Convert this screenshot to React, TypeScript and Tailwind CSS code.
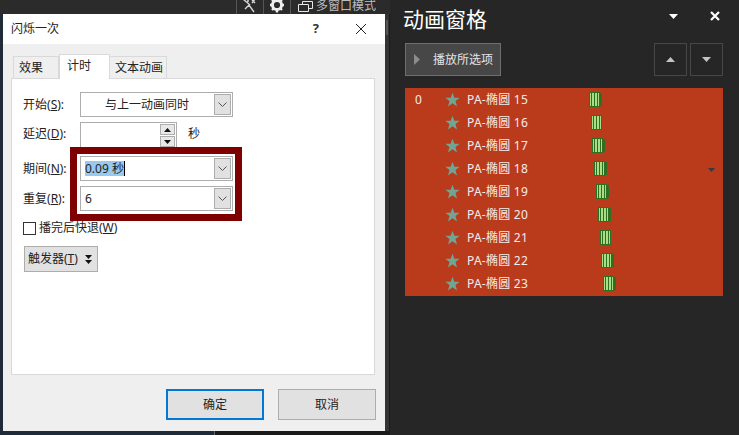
const FONT = "font-['Noto_Sans','Noto_Sans_CJK_SC',sans-serif]";

const rows = [
  { name: "PA-椭圆 15", num: "0", bar: 589, tail: true },
  { name: "PA-椭圆 16", num: "", bar: 591, tail: false },
  { name: "PA-椭圆 17", num: "", bar: 592, tail: true },
  { name: "PA-椭圆 18", num: "", bar: 594, tail: true, arrow: true },
  { name: "PA-椭圆 19", num: "", bar: 596, tail: true },
  { name: "PA-椭圆 20", num: "", bar: 598, tail: true },
  { name: "PA-椭圆 21", num: "", bar: 600, tail: false },
  { name: "PA-椭圆 22", num: "", bar: 601, tail: true },
  { name: "PA-椭圆 23", num: "", bar: 603, tail: true },
];

function Caret({ up = false, color = "#fff", w = 10, h = 5 }: { up?: boolean; color?: string; w?: number; h?: number }) {
  return (
    <svg width={w} height={h} viewBox="0 0 10 5" preserveAspectRatio="none" className="block">
      <polygon points={up ? "5,0 10,5 0,5" : "0,0 10,0 5,5"} fill={color} />
    </svg>
  );
}

function Chevron() {
  return (
    <svg width="9" height="5" viewBox="0 0 9 5" className="block">
      <path d="M0.5 0.5 L4.5 4.5 L8.5 0.5" fill="none" stroke="#555" strokeWidth="1" />
    </svg>
  );
}

function Combo({ children, className = "" }: { children: React.ReactNode; className?: string }) {
  return (
    <div className={`flex h-[25px] w-[153px] items-center border border-[#adadad] bg-white pr-[1px] text-[12px] text-[#222] ${className}`}>
      <div className="flex-1 min-w-0">{children}</div>
      <div className="flex h-[21px] w-[17px] items-center justify-center border border-[#adadad] bg-[#e1e1e1]">
        <Chevron />
      </div>
    </div>
  );
}

function Label({ text, k }: { text: string; k: string }) {
  return (
    <div className="w-[57px] shrink-0 text-[12px] text-[#222]">
      {text}(<span className="underline">{k}</span>):
    </div>
  );
}

function GreenBar({ left, tail }: { left: number; tail: boolean }) {
  return (
    <div className="absolute top-[4px] flex h-[15px]" style={{ left: left - 405 }}>
      <div className="flex h-full w-[11px] justify-between border border-[#2f6f22] bg-[#a9de86] px-[1px]">
        <div className="w-[1px] bg-[#2f6f22]" />
        <div className="w-[1px] bg-[#2f6f22]" />
        <div className="w-[1px] bg-[#2f6f22]" />
      </div>
      {tail && <div className="my-[1px] w-[2px] bg-[#2f6f22]" />}
    </div>
  );
}

function TopBar() {
  return (
    <div className="flex h-[14px] items-start justify-end bg-[#2b2b2b] pr-[14px] text-[12px] leading-[12px] text-[#bdbdbd]">
      <div className="flex h-[14px] w-[27px] items-start justify-center border-l border-[#555] pl-[1px]">
        <svg width="16" height="13" viewBox="0 1 16 13">
          <path d="M1 0 L8 6 M3 10 L7 6 L12 13 M10 1 L13 4 M13 0 L10 4 M5 2 L7 2" stroke="#d5d5d5" strokeWidth="1.4" fill="none" />
        </svg>
      </div>
      <div className="flex h-[14px] w-[27px] items-start justify-center border-l border-[#555]">
        <svg width="16" height="13" viewBox="0 3 16 13">
          <circle cx="8" cy="8" r="4.6" fill="none" stroke="#eee" strokeWidth="3" />
          <path d="M8 0.5V3 M8 13V15.5 M1 8H3.5 M12.5 8H15 M3 3L4.5 4.5 M13 3L11.5 4.5 M3 13L4.5 11.5 M13 13L11.5 11.5" stroke="#eee" strokeWidth="2.4" />
        </svg>
      </div>
      <div className="flex h-[14px] items-start border-l border-[#555] pl-[7px]">
        <svg width="15" height="14" viewBox="0 0 15 14" className="mr-[3px]">
          <path d="M0.5 4.5H10.5V11.5H0.5Z M4.5 4V1.5H14.5V8.5H11" fill="none" stroke="#e8e8e8" strokeWidth="1" />
        </svg>
        <div className="h-[12px] leading-[12px]">多窗口模式</div>
      </div>
    </div>
  );
}

function Dialog() {
  return (
    <div className="ml-[3px] flex h-[417px] w-[382px] shrink-0 flex-col bg-[#efefef] text-[#222]">
      <div className="flex h-[30px] items-center bg-white pl-[8px] pr-[18px] text-[12px]">
        <span className="flex-1">闪烁一次</span>
        <span className="mr-[36px] text-[13px] font-bold text-[#333]">?</span>
        <svg width="12" height="12" viewBox="0 0 12 12">
          <path d="M1 1L11 11M11 1L1 11" stroke="#222" strokeWidth="1" />
        </svg>
      </div>

      <div className="flex h-[34px] items-end pl-[10px] text-[12px]">
        <div className="flex h-[22px] w-[46px] items-center border border-b-0 border-[#d9d9d9] pl-[5px]">效果</div>
        <div className="z-10 -mb-[1px] flex h-[25px] w-[51px] items-start border border-b-0 border-[#d9d9d9] bg-white pl-[7px] pt-[2px]">计时</div>
        <div className="flex h-[22px] w-[57px] items-center border border-b-0 border-l-0 border-[#d9d9d9] pl-[5px]">文本动画</div>
      </div>

      <div className="relative mx-[8px] flex h-[297px] w-[364px] flex-col border border-[#d9d9d9] bg-white pl-[11px] pt-[13px]">
        <div className="flex h-[25px] items-center">
          <Label text="开始" k="S" />
          <Combo><div className="pl-[24px]">与上一动画同时</div></Combo>
        </div>

        <div className="mt-[5px] flex h-[26px] items-start">
          <div className="pt-[3px]"><Label text="延迟" k="D" /></div>
          <div className="flex h-[26px] w-[97px] flex-col items-end gap-[1px] border border-[#adadad] px-[1px] pt-[1px]">
            <div className="flex h-[11px] w-[15px] items-center justify-center border border-[#adadad] bg-[#e8e8e8]"><Caret up color="#111" w={7} h={4} /></div>
            <div className="flex h-[11px] w-[15px] items-center justify-center border border-[#adadad] bg-[#e8e8e8]"><Caret color="#111" w={7} h={4} /></div>
          </div>
          <span className="ml-[11px] pt-[3px] text-[12px]">秒</span>
        </div>

        <div className="mt-[8px] flex h-[25px] items-center">
          <Label text="期间" k="N" />
          <Combo>
            <div className="flex items-center pl-[4px]">
              <span className="bg-[#99c9ef] leading-[15px] text-[#222]">0.09 秒</span>
              <span className="h-[15px] w-[1px] bg-black" />
            </div>
          </Combo>
        </div>

        <div className="mt-[5px] flex h-[25px] items-center">
          <Label text="重复" k="R" />
          <Combo><div className="pl-[4px]">6</div></Combo>
        </div>

        <div className="mt-[11px] flex h-[13px] items-center text-[12px]">
          <div className="h-[13px] w-[13px] border border-[#333] bg-white" />
          <span className="ml-[3px] -translate-y-[1px]">播完后快退(<span className="underline">W</span>)</span>
        </div>

        <div className="ml-[1px] mt-[11px] flex h-[26px] w-[74px] items-center border border-[#adadad] bg-[#e1e1e1] pl-[3px] text-[12px]">
          <span>触发器(<span className="underline">T</span>)</span>
          <div className="ml-[7px] flex flex-col gap-[1px]">
            <Caret color="#111" w={7} h={4} />
            <Caret color="#111" w={7} h={4} />
          </div>
        </div>

        {/* 红色标注框 */}
        <div className="absolute left-[58px] top-[68px] h-[74px] w-[172px] border-[7px] border-[#7f0000]" />
      </div>

      <div className="flex justify-end gap-[14px] pr-[9px] pt-[14px] text-[12px]">
        <div className="flex h-[31px] w-[98px] items-center justify-center border-2 border-[#0078d7] bg-[#e1e1e1]">确定</div>
        <div className="flex h-[31px] w-[98px] items-center justify-center border border-[#adadad] bg-[#e1e1e1]">取消</div>
      </div>
    </div>
  );
}

function Pane() {
  return (
    <div className="flex flex-1 flex-col bg-[#262626] pl-[15px] pr-[16px]">
      <div className="flex h-[43px] items-start pt-[5px]">
        <span className="-ml-[2px] flex-1 text-[21px] leading-[28px] text-white">动画窗格</span>
        <div className="mr-[32px] mt-[9px]"><Caret w={9} h={5} /></div>
        <svg width="10" height="10" viewBox="0 0 10 10" className="mr-[3px] mt-[6px]">
          <path d="M1 1L9 9M9 1L1 9" stroke="#fff" strokeWidth="2.2" />
        </svg>
      </div>

      <div className="flex h-[33px] items-stretch">
        <div className="flex w-[96px] items-center border border-[#6e6e6e] bg-[#474747] text-[12px] text-[#e4e4e4]">
          <svg width="6" height="11" viewBox="0 0 6 11" className="ml-[8px] mr-[13px]">
            <polygon points="0,0 6,5.5 0,11" fill="#8c8c8c" />
          </svg>
          播放所选项
        </div>
        <div className="flex-1" />
        <div className="flex w-[33px] items-center justify-center border border-[#474747]"><Caret up color="#c4c4c4" w={9} h={5} /></div>
        <div className="ml-[3px] flex w-[33px] items-center justify-center border border-[#474747]"><Caret color="#c4c4c4" w={9} h={5} /></div>
      </div>

      <div className="mt-[12px] flex flex-col bg-[#b93b1c] pb-[1px]">
        {rows.map((r) => (
          <div key={r.name} className="relative flex h-[23px] items-center text-[12px] tracking-[0.25px] text-[#f4ecec]">
            <span className="w-[40px] pl-[10px]">{r.num}</span>
            <svg width="15" height="15" viewBox="0 0 24 24" className="mr-[7px]">
              <polygon points="12,1 15,9 23.5,9.3 16.8,14.5 19.2,23 12,18 4.8,23 7.2,14.5 0.5,9.3 9,9" fill="#6ea595" />
            </svg>
            <span>{r.name}</span>
            <GreenBar left={r.bar} tail={r.tail} />
            {r.arrow && (
              <div className="absolute right-[8px] top-[11px]"><Caret color="#3a3a3a" w={7} h={4} /></div>
            )}
          </div>
        ))}
      </div>
    </div>
  );
}

export default function App() {
  return (
    <div className={`flex h-[435px] w-[739px] overflow-hidden bg-[#262626] ${FONT}`}>
      <div className="flex w-[390px] shrink-0 flex-col bg-[#1f2b38]">
        <TopBar />
        <div className="flex">
          <Dialog />
          {/* 对话框右侧的滚动条 */}
          <div className="flex-1 border-r border-[#1a1a1a] bg-[#333333] px-[1px] pt-[6px]">
            <div className="h-[15px] w-[2px] bg-[#555555]" />
          </div>
        </div>
        <div className="flex flex-1">
          <div className="w-[214px]" />
          <div className="flex-1 border-l border-[#666666] bg-[#1a1a1a]" />
        </div>
      </div>
      <Pane />
    </div>
  );
}
